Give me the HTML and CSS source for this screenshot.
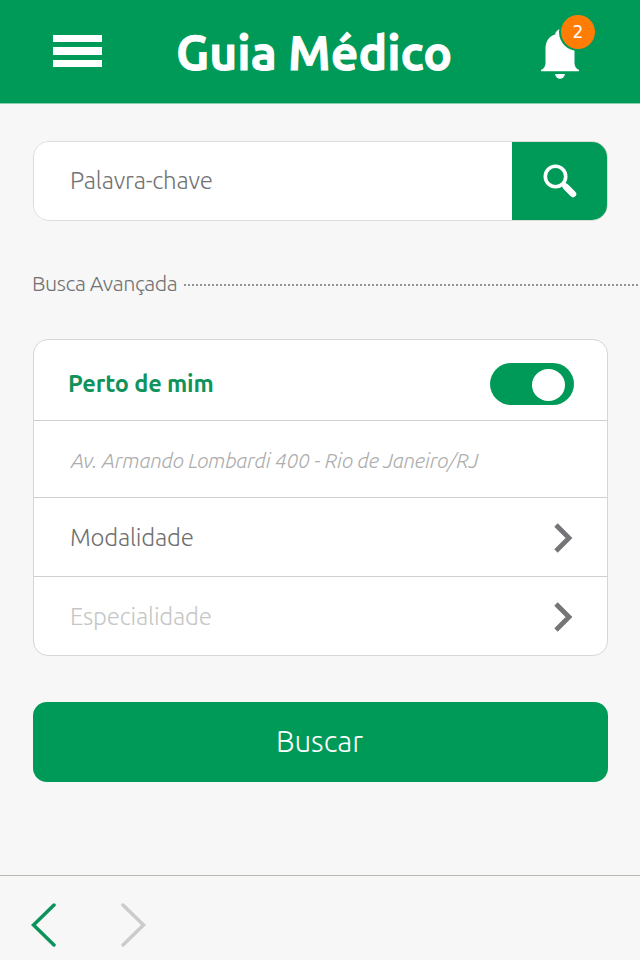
FILE: index.html
```html
<!DOCTYPE html>
<html lang="pt-BR">
<head>
  <meta charset="UTF-8" />
  <meta name="viewport" content="width=device-width, initial-scale=1.0" />
  <title>Guia Médico</title>
  <link rel="stylesheet" href="styles.css">
</head>
<body>
  <header class="header">
    <button class="menu" aria-label="Menu">
      <span></span>
      <span></span>
      <span></span>
    </button>
    <h1 class="title">Guia Médico</h1>
    <button class="bell" aria-label="Notificações">
      <svg width="40" height="50" viewBox="0 0 40 50">
        <path fill="#fff" d="M15 5.500Q16 2 18.500 .500H22V4C30 7 34.500 12 34.500 21V34Q34.500 39 39 41Q39.500 42.300 38.500 42.300H1.500Q.500 42.300 1 41Q5.500 39 5.500 34V20C5.500 12 9 7.500 15 5.500Z"/>
        <path fill="#fff" d="M15 45H25Q24 49.800 20 49.800T15 45Z"/>
      </svg>
      <span class="badge">2</span>
    </button>
  </header>

  <main class="content">
    <form class="search">
      <input class="search-input" type="text" placeholder="Palavra-chave">
      <button class="search-button" type="button" aria-label="Pesquisar">
        <svg width="34" height="34" viewBox="0 0 34 34" fill="none" stroke="#fff">
          <circle cx="12.500" cy="12.500" r="10.200" stroke-width="3.600"/>
          <path d="M19.500 19.500L22 22" stroke-width="5"/>
          <path d="M23 23L30 30" stroke-width="6.500" stroke-linecap="round"/>
        </svg>
      </button>
    </form>

    <div class="divider">
      <h2 class="divider-label">Busca Avançada</h2>
      <span class="divider-line"></span>
    </div>

    <div class="card">
      <div class="row row-toggle">
        <span class="near">Perto de mim</span>
        <span class="toggle"><span class="knob"></span></span>
      </div>
      <div class="row row-address">
        <span class="address">Av. Armando Lombardi 400 - Rio de Janeiro/RJ</span>
      </div>
      <div class="row row-mode">
        <span class="mode">Modalidade</span>
        <svg width="20" height="30" viewBox="0 0 20 30" fill="none" stroke="#747578" stroke-width="4.800">
          <path d="M2 2L15 15L2 28"/>
        </svg>
      </div>
      <div class="row row-specialty">
        <span class="specialty">Especialidade</span>
        <svg width="20" height="30" viewBox="0 0 20 30" fill="none" stroke="#747574" stroke-width="4.800">
          <path d="M2 2L15 15L2 28"/>
        </svg>
      </div>
    </div>

    <button class="submit"><span>Buscar</span></button>
  </main>

  <footer class="footer">
    <svg width="26" height="44" viewBox="0 0 26 44" fill="none" stroke="#0c935c" stroke-width="3.500" stroke-linecap="round">
      <path d="M23 2L2.500 22L23 42"/>
    </svg>
    <svg width="26" height="44" viewBox="0 0 26 44" fill="none" stroke="#cbcbcb" stroke-width="3.500" stroke-linecap="round">
      <path d="M3 2L23.500 22L3 42"/>
    </svg>
  </footer>
</body>
</html>
```

FILE: styles.css
```css
* {
  box-sizing: border-box;
}

body {
  margin: 0;
  height: 960px;
  display: flex;
  flex-direction: column;
  overflow: hidden;
  background: #f7f7f7;
  color: #727272;
  font-family: Ubuntu, 'Noto Sans', sans-serif;
  font-weight: 300;
}

button {
  border: none;
  padding: 0;
  font-family: inherit;
  cursor: pointer;
}

.header {
  height: 103px;
  padding: 0 60px 0 53px;
  display: flex;
  align-items: center;
  background: #009a58;
  box-shadow: 0 1px 0 #8fcfb1;
}

.menu {
  width: 49px;
  display: flex;
  flex-direction: column;
  gap: 5px;
  padding-bottom: 1px;
  background: none;
}

.menu span {
  height: 7.500px;
  background: #fff;
}

.title {
  margin: 0 auto 0 74px;
  color: #fff;
  font-size: 48px;
  font-weight: 700;
  line-height: 60px;
  white-space: nowrap;
  -webkit-text-stroke: 0.800px #fff;
}

.bell {
  position: relative;
  width: 40px;
  height: 50px;
  margin-top: 5px;
  background: none;
}

.bell svg {
  display: block;
}

.badge {
  position: absolute;
  top: -14px;
  left: 21px;
  width: 34px;
  height: 34px;
  border-radius: 50%;
  background: #ff7d05;
  box-shadow: 0 0 0 2px #009a58;
  color: #fff;
  font-family: 'DejaVu Sans', sans-serif;
  font-size: 17px;
  font-weight: 400;
  line-height: 34px;
  text-align: center;
}

.content {
  flex: 1;
  padding: 38px 32px 0 33px;
}

.search {
  height: 80px;
  display: flex;
  border: 1.500px solid #dcdcdc;
  border-radius: 16px;
  overflow: hidden;
}

.search-input {
  flex: 1;
  min-width: 0;
  padding: 0 0 2px 36px;
  border: none;
  outline: none;
  background: #fff;
  font: inherit;
  font-size: 24px;
  letter-spacing: -0.200px;
}

.search-input::placeholder {
  color: #727272;
}

.search-button {
  width: 95px;
  display: flex;
  justify-content: center;
  align-items: center;
  background: #009a58;
}

.divider {
  margin: 47px -32px 0 -1px;
  height: 30px;
  display: flex;
  align-items: center;
  gap: 7px;
}

.divider-label {
  margin: 0;
  font-size: 21.500px;
  font-weight: 300;
  line-height: 30px;
  letter-spacing: -0.450px;
  white-space: nowrap;
}

.divider-line {
  flex: 1;
  height: 2px;
  margin-top: 3px;
  background: repeating-linear-gradient(90deg, #939393 0 2px, #f7f7f7 2px 4px);
}

.card {
  margin-top: 41px;
  border: 1px solid #d6d6d6;
  border-radius: 15px;
  background: #fff;
  overflow: hidden;
}

.row {
  display: flex;
  justify-content: space-between;
  align-items: center;
  padding: 0 33px 0 36px;
  white-space: nowrap;
}

.row + .row {
  border-top: 1.500px solid #cfcfcf;
}

.row-toggle {
  height: 80px;
  padding-top: 8px;
  padding-left: 34px;
}

.row-address {
  height: 77px;
  padding-top: 2px;
}

.row-mode {
  height: 79px;
  padding-top: 1px;
}

.row-specialty {
  height: 79px;
  padding-top: 1px;
}

.near {
  margin-bottom: 2px;
  color: #10935b;
  font-size: 23.500px;
  font-weight: 600;
  letter-spacing: -0.150px;
}

.toggle {
  width: 84px;
  height: 42px;
  padding: 2px 9px 0 0;
  display: flex;
  justify-content: flex-end;
  align-items: center;
  border-radius: 21px;
  background: #009a58;
}

.knob {
  width: 33px;
  height: 32px;
  border-radius: 50%;
  background: #fff;
}

.address {
  padding-left: 1px;
  color: #adadad;
  font-size: 21px;
  font-style: italic;
  letter-spacing: -0.250px;
}

.mode,
.specialty {
  font-size: 24px;
  letter-spacing: -0.200px;
}

.mode {
  color: #6e6f71;
}

.specialty {
  color: #c4c7c6;
}

.submit {
  display: block;
  width: 575px;
  height: 80px;
  margin-top: 46px;
  border-radius: 14px;
  background: #009a58;
  color: #fff;
  font-size: 29.500px;
  font-weight: 300;
}

.submit span {
  position: relative;
  top: -1px;
  left: -1px;
}

.footer {
  height: 85px;
  padding: 13px 32px 0 31px;
  display: flex;
  align-items: center;
  gap: 63px;
  border-top: 1px solid #b8bab2;
}
```
